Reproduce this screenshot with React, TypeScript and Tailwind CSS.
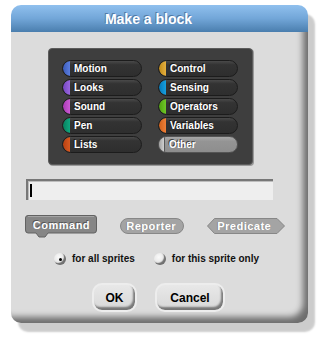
import React from "react";

const cats = [
  { name: "Motion", cap: "bg-[linear-gradient(90deg,#3b5bb8,#5b7ee0)]" },
  { name: "Control", cap: "bg-[linear-gradient(90deg,#c08a18,#e6b040)]" },
  { name: "Looks", cap: "bg-[linear-gradient(90deg,#7446c0,#9a66e0)]" },
  { name: "Sensing", cap: "bg-[linear-gradient(90deg,#0478b8,#18a0e0)]" },
  { name: "Sound", cap: "bg-[linear-gradient(90deg,#a83ab2,#cc5ad6)]" },
  { name: "Operators", cap: "bg-[linear-gradient(90deg,#50a010,#70c828)]" },
  { name: "Pen", cap: "bg-[linear-gradient(90deg,#08805e,#10a880)]" },
  { name: "Variables", cap: "bg-[linear-gradient(90deg,#d0601a,#f08038)]" },
  { name: "Lists", cap: "bg-[linear-gradient(90deg,#b84010,#d85a22)]" },
];

function CatButton({ name, cap }: { name: string; cap: string }) {
  return (
    <div className="flex h-[17px] w-[80px] items-center overflow-hidden rounded-full border border-[#1c1c1c] bg-[linear-gradient(180deg,#4a4a4a_0%,#333333_25%,#2e2e2e_100%)]">
      <div className={`h-full w-[7px] rounded-l-full ${cap}`} />
      <span className="ml-[4px] text-[10px] font-bold leading-none text-white [text-shadow:-1px_-1px_0_rgba(0,0,0,0.6)]">
        {name}
      </span>
    </div>
  );
}

function Radio({ on, label }: { on: boolean; label: string }) {
  return (
    <div className="flex items-center">
      <div className="flex h-[12px] w-[12px] items-center justify-center rounded-full bg-[radial-gradient(circle_at_40%_35%,#fafafa_0%,#e6e6e6_55%,#cfcfcf_100%)] shadow-[inset_-2px_-2px_1px_rgba(0,0,0,0.5)]">
        {on && <div className="h-[3px] w-[3px] rounded-full bg-black" />}
      </div>
      <span className="ml-[6px] text-[10px] font-bold leading-none text-[#111]">{label}</span>
    </div>
  );
}

function PushButton({ label, w }: { label: string; w: string }) {
  return (
    <div className={`flex h-[29px] ${w} items-center justify-center rounded-[10px] border-2 border-[#ededed] bg-[linear-gradient(180deg,#e8e8e8,#d8d8d8)] shadow-[inset_-2px_-3px_2px_rgba(0,0,0,0.45)]`}>
      <span className="text-[12px] font-bold leading-none text-black">{label}</span>
    </div>
  );
}

export default function App() {
  return (
    <div
      className="h-[338px] w-[327px] overflow-hidden bg-white pt-[5px] pl-[11px]"
      style={{ fontFamily: '"Liberation Sans", Arial, sans-serif' }}
    >
      <div className="flex h-[318px] w-[297px] flex-col rounded-[10px] shadow-[7px_9px_2px_rgba(0,0,0,0.2)]">
        {/* title */}
        <div className="flex h-[27px] items-center justify-center rounded-t-[10px] bg-[linear-gradient(180deg,#90c0ee_0%,#72a6d8_50%,#4a7eae_100%)] pr-[22px]">
          <span className="text-[14px] font-bold leading-none text-white [text-shadow:-1px_-1px_0_rgba(40,70,110,0.5)]">
            Make a block
          </span>
        </div>
        {/* body */}
        <div className="flex flex-1 flex-col rounded-b-[10px] bg-[#dcdcdc] shadow-[inset_-9px_-10px_6px_-4px_rgba(0,0,0,0.5)]">
          {/* categories */}
          <div className="ml-[37px] mt-[16px] h-[117px] w-[205px] rounded-[4px] border border-[#5c5c5c] bg-[#3e3e3e] pl-[13px] pt-[11px] shadow-[1px_1px_0_#9a9a9a]">
            <div className="grid grid-cols-[80px_80px] gap-x-[16px] gap-y-[2px]">
              {cats.map((c) => (
                <CatButton key={c.name} name={c.name} cap={c.cap} />
              ))}
              <div className="flex h-[17px] w-[80px] items-center overflow-hidden rounded-full border border-[#555] bg-[linear-gradient(180deg,#a8a8a8_0%,#949494_30%,#8e8e8e_100%)]">
                <div className="h-full w-[6px] rounded-l-full border-r border-[#555] bg-[linear-gradient(90deg,#a0a0a0,#d0d0d0)]" />
                <span className="ml-[4px] text-[10px] font-bold leading-none text-white [text-shadow:-1px_-1px_0_rgba(0,0,0,0.6)]">
                  Other
                </span>
              </div>
            </div>
          </div>
          {/* input */}
          <div className="relative ml-[15px] mt-[14px] h-[21px] w-[247px] border-l-2 border-t-2 border-[#777] bg-[#eeeeee] shadow-[inset_1px_1px_0_#bdbdbd]">
            <div className="absolute left-[2px] top-[3px] h-[13px] w-[2px] bg-black" />
          </div>
          {/* block types */}
          <div className="ml-[14px] mt-[15px] flex items-start">
            <svg width="72" height="23" viewBox="0 0 72 23">
              <path
                d="M3,0.5 H69 Q71.5,0.5 71.5,3 V15 Q71.5,18 69,18 H23 L20,22 H14 L11,18 H3 Q0.5,18 0.5,15 V3 Q0.5,0.5 3,0.5 Z"
                fill="#868686"
                stroke="#626262"
                strokeWidth="1"
              />
              <path d="M3,1.5 H69" stroke="#a4a4a4" strokeWidth="1" />
              <text
                x="7"
                y="13"
                fontFamily='"Liberation Sans", Arial, sans-serif'
                fontWeight="bold"
                fontSize="11"
                letterSpacing="0.5"
                fill="#555555"
              >
                Command
              </text>
              <text
                x="7.8"
                y="13.6"
                fontFamily='"Liberation Sans", Arial, sans-serif'
                fontWeight="bold"
                fontSize="11"
                letterSpacing="0.5"
                fill="#ffffff"
              >
                Command
              </text>
            </svg>
            <svg width="64" height="16" viewBox="0 0 64 16" className="ml-[23px] mt-[3px]">
              <rect x="0.5" y="0.5" width="63" height="15" rx="7.5" fill="#a4a4a4" stroke="#878787" />
              <text
                x="5.5"
                y="11.5"
                fontFamily='"Liberation Sans", Arial, sans-serif'
                fontWeight="bold"
                fontSize="11"
                letterSpacing="0.5"
                fill="#7c7c7c"
              >
                Reporter
              </text>
              <text
                x="6.2"
                y="12.2"
                fontFamily='"Liberation Sans", Arial, sans-serif'
                fontWeight="bold"
                fontSize="11"
                letterSpacing="0.5"
                fill="#ffffff"
              >
                Reporter
              </text>
            </svg>
            <svg width="78" height="16" viewBox="0 0 78 16" className="ml-[23px] mt-[3px]">
              <polygon points="7.5,0.5 70,0.5 77.5,8 70,15.5 7.5,15.5 0.5,8" fill="#a4a4a4" stroke="#878787" />
              <text
                x="9.5"
                y="11.5"
                fontFamily='"Liberation Sans", Arial, sans-serif'
                fontWeight="bold"
                fontSize="11"
                letterSpacing="0.5"
                fill="#7c7c7c"
              >
                Predicate
              </text>
              <text
                x="10.2"
                y="12.2"
                fontFamily='"Liberation Sans", Arial, sans-serif'
                fontWeight="bold"
                fontSize="11"
                letterSpacing="0.5"
                fill="#ffffff"
              >
                Predicate
              </text>
            </svg>
          </div>
          {/* radios */}
          <div className="ml-[43px] mt-[15px] flex items-center gap-[19px]">
            <Radio on label="for all sprites" />
            <Radio on={false} label="for this sprite only" />
          </div>
          {/* buttons */}
          <div className="ml-[81px] mt-[18px] flex gap-[18px]">
            <PushButton label="OK" w="w-[45px]" />
            <PushButton label="Cancel" w="w-[70px]" />
          </div>
        </div>
      </div>
    </div>
  );
}
